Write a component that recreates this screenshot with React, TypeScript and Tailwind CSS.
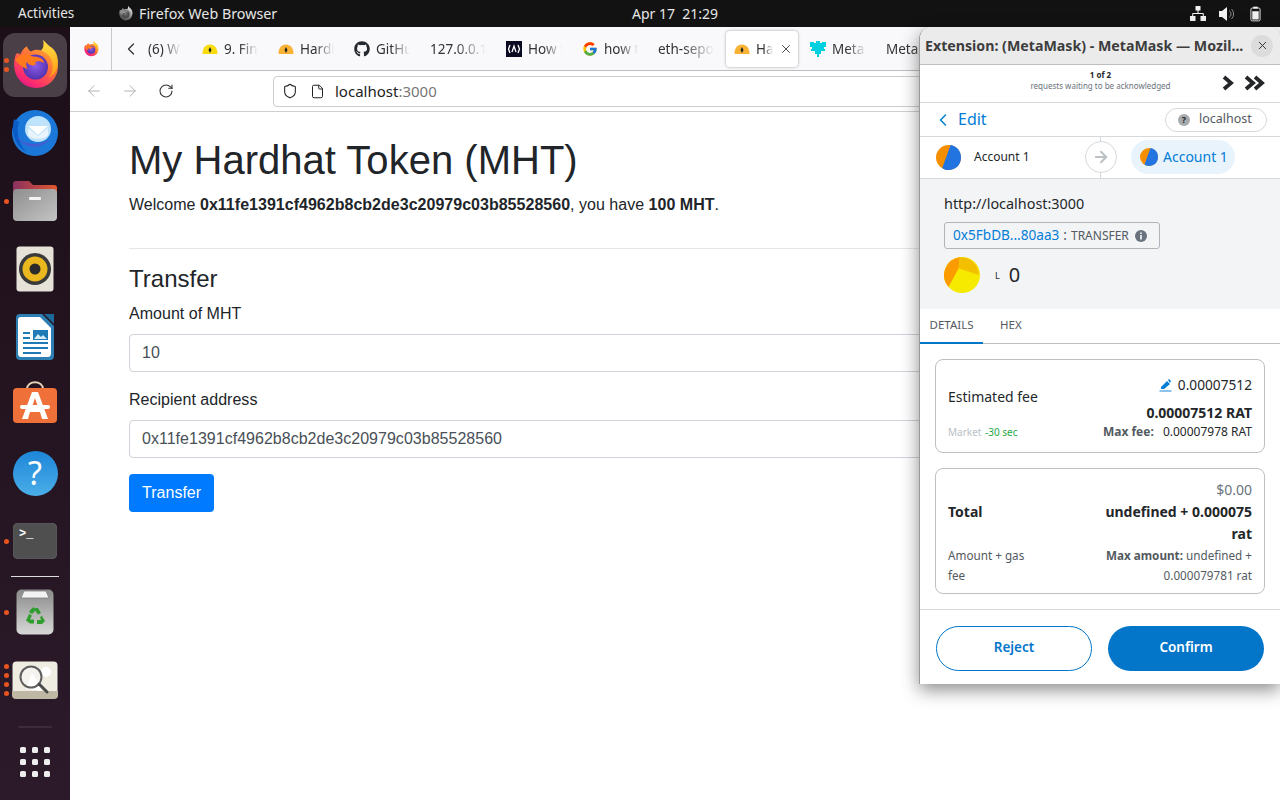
import { ArrowLeft, ArrowRight, ChevronLeft, File, RotateCw, Shield, X } from "lucide-react";
import { FaGithub } from "react-icons/fa";
import { FcGoogle } from "react-icons/fc";

function FirefoxLogo({ size = 48, gray = false }: { size?: number; gray?: boolean }) {
  const id = gray ? "g" : "c";
  return (
    <svg width={size} height={size} viewBox="0 0 48 48" style={gray ? { filter: "grayscale(1)" } : undefined}>
      <defs>
        <linearGradient id={`ff1${id}`} x1="0.8" y1="0" x2="0.2" y2="1">
          <stop offset="0" stopColor="#ffbd2e" />
          <stop offset="0.45" stopColor="#ff7139" />
          <stop offset="0.8" stopColor="#ff2d6d" />
          <stop offset="1" stopColor="#d8148d" />
        </linearGradient>
        <linearGradient id={`ff2${id}`} x1="0.5" y1="0" x2="0.5" y2="1">
          <stop offset="0" stopColor="#ffe14a" />
          <stop offset="1" stopColor="#ff980e" />
        </linearGradient>
        <radialGradient id={`ff3${id}`} cx="0.5" cy="0.45" r="0.6">
          <stop offset="0" stopColor="#8f5be8" />
          <stop offset="1" stopColor="#4b2ea8" />
        </radialGradient>
      </defs>
      <path d="M6 13C3 20 3 30 8 37c4 6 10 9 17 9 12 0 21-9 21-21 0-7-3-13-7-17-2-2-5-5-7-8 1 5 0 8-2 10-3-1-7-1-10 1-2-1-3-3-4-5-3 2-5 5-6 8l-1-1z" fill={`url(#ff1${id})`} />
      <path d="M32 0c1 5 0 8-2 10 6 2 11 8 11 15 0 4-1 8-4 11 6-3 9-8 9-15 0-8-4-13-8-15-2-2-5-4-6-6z" fill={`url(#ff2${id})`} />
      <circle cx="24.5" cy="26" r="12" fill={`url(#ff3${id})`} />
      <path d="M5 19c3-4 7-5 10-5 3 0 5 2 9 2 4 0 8 2 9 6-3-2-7-2-9-1 1 1 1 2 0 3-2 1-6 0-8-3-1 3 0 5 1 7-6-2-9-5-12-9z" fill="#ff7a1c" />
    </svg>
  );
}

function Hat({ color }: { color: string }) {
  return (
    <svg width="16" height="16" viewBox="0 0 16 16" className="shrink-0">
      <path d="M0.5 13C0.5 7 3.5 3.5 8 3.5S15.5 7 15.5 13Z" fill={color} />
      <path d="M8 6 9.5 9 8 12 6.5 9Z" fill="#222" />
    </svg>
  );
}

function CodeIcon() {
  return (
    <svg width="16" height="16" viewBox="0 0 16 16" className="shrink-0">
      <rect width="16" height="16" fill="#0a0a23" />
      <path d="M4 4 2.5 8 4 12M12 4l1.500 4L12 12M6 11l2-6 2 6" fill="none" stroke="#fff" strokeWidth="1.300" />
    </svg>
  );
}

function PuzzleIcon() {
  return (
    <svg width="16" height="16" viewBox="0 0 16 16" className="shrink-0">
      <path d="M0 1h4v1h2V0h4v2h2V1h4v5h-2v2h1v2h-4v3h-2v3H7v-3H5v-3H1V8h1V6H0z" fill="#00d0e0" />
    </svg>
  );
}

function Tab({ icon, label, active }: { icon?: React.ReactNode; label: string; active?: boolean }) {
  const width = active ? "w-[17px]" : icon ? "w-[34px]" : "w-[56px]";
  return (
    <div className={`mx-[2px] flex h-[36px] w-[72px] shrink-0 items-center gap-[6px] rounded-[4px] pl-[8px] ${active ? "bg-white shadow-[0_0_3px_rgba(0,0,0,0.35)]" : ""}`}>
      {icon}
      <span className={`shrink-0 overflow-hidden whitespace-nowrap [mask-image:linear-gradient(to_right,#000_45%,transparent)] ${width}`}>{label}</span>
      {active && <X size={14} strokeWidth={1.5} className="shrink-0 text-[#333]" />}
    </div>
  );
}

function Dot() {
  return <span className="h-[5px] w-[5px] rounded-full bg-[#e95420]" />;
}

function Slot({ dots = 0, active, children }: { dots?: number; active?: boolean; children: React.ReactNode }) {
  return (
    <div className="relative flex h-[68px] w-[70px] shrink-0 items-center justify-center">
      {active && <div className="absolute left-[3px] top-[2px] h-[64px] w-[64px] rounded-[12px] bg-[#4a3f46]" />}
      <div className="relative flex items-center justify-center">{children}</div>
      {dots > 0 && (
        <div className="absolute left-[3.500px] top-0 flex h-full flex-col justify-center gap-[4px]">
          {Array.from({ length: dots }).map((_, i) => (
            <Dot key={i} />
          ))}
        </div>
      )}
    </div>
  );
}

function Thunderbird() {
  return (
    <svg width="50" height="48" viewBox="0 0 50 48">
      <circle cx="25" cy="24" r="23" fill="#1b78d8" />
      <path d="M4 10c-3 12 0 26 12 33C8 33 6 22 9 13z" fill="#0a5bc4" />
      <circle cx="28" cy="20" r="13" fill="#bfe3fb" />
      <path d="M18 17h20l-10 9z" fill="#fff" />
      <path d="M18 19l10 8 10-8v7c-3 5-17 5-20 0z" fill="#e9f4fc" />
      <path d="M6 26c6 10 22 12 34 4-8 10-26 12-34-4z" fill="#5a4fcf" opacity="0.7" />
    </svg>
  );
}

function Files() {
  return (
    <svg width="46" height="42" viewBox="0 0 46 42">
      <defs>
        <linearGradient id="ft" x1="0" x2="1" y1="0" y2="0">
          <stop offset="0" stopColor="#8a3060" />
          <stop offset="1" stopColor="#e4572e" />
        </linearGradient>
        <linearGradient id="fb" x1="0" x2="1" y1="0" y2="1">
          <stop offset="0" stopColor="#8e8e8e" />
          <stop offset="1" stopColor="#c4c4c4" />
        </linearGradient>
      </defs>
      <path d="M1 20V4q0-3 3-3h13l4 4h21q3 0 3 3v12z" fill="url(#ft)" />
      <rect x="1" y="9" width="44" height="32" rx="4" fill="url(#fb)" />
      <rect x="17" y="17" width="12" height="3" rx="1" fill="#f4f4f4" />
    </svg>
  );
}

function Rhythmbox() {
  return (
    <svg width="38" height="46" viewBox="0 0 38 46">
      <rect x="0.500" y="0.500" width="37" height="45" rx="3" fill="#e7e2d8" />
      <circle cx="19" cy="23" r="16" fill="#3a3a3a" />
      <circle cx="19" cy="23" r="12.500" fill="#eab71e" />
      <circle cx="19" cy="23" r="5.500" fill="#2b2b2b" />
    </svg>
  );
}

function Writer() {
  return (
    <svg width="38" height="46" viewBox="0 0 38 46">
      <path d="M4 0h22l12 12v30q0 4-4 4H4q-4 0-4-4V4q0-4 4-4z" fill="#2d7fb3" />
      <path d="M5 3h19l11 11v25q0 4-3 4H5q-3 0-3-4V6q0-3 3-3z" fill="#fff" />
      <path d="M28 0h10v10z" fill="#1d6a9a" />
      <path d="M7 18h7v2H7zM7 23h7v2H7zM7 28h25v2H7zM7 33h25v2H7zM7 38h18v2H7z" fill="#1f7ab5" />
      <rect x="17" y="16" width="15" height="10" fill="#1f7ab5" />
      <path d="M18 25l4-5 3 3 2-2 4 4z" fill="#d6ecf8" />
    </svg>
  );
}

function Software() {
  return (
    <svg width="46" height="42" viewBox="0 0 46 42" className="-mt-[6px]">
      <path d="M15 8c0-9 16-9 16 0" fill="none" stroke="#e8d3b8" strokeWidth="2" />
      <rect x="1" y="7" width="44" height="35" rx="4" fill="#ef7139" />
      <path d="M20 11h6l10 27h-6l-2-7H18l-2 7h-6zM23 17l-3 9h6z" fill="#fff" />
      <rect x="8" y="24" width="30" height="4" rx="2" fill="#fff" />
    </svg>
  );
}

function Terminal() {
  return (
    <div className="flex h-[36px] w-[44px] rounded-[5px] bg-[#4f4f4f] px-[6px] pt-[3px] font-['Liberation_Mono',monospace] text-[12px] font-bold leading-[16px] text-white shadow-[inset_0_0_1px_#999]">
      &gt;_
    </div>
  );
}

function Trash() {
  return (
    <svg width="38" height="46" viewBox="0 0 38 46">
      <defs>
        <linearGradient id="tr" x1="0" x2="0" y1="0" y2="1">
          <stop offset="0" stopColor="#8a8a8a" />
          <stop offset="1" stopColor="#d8d8d8" />
        </linearGradient>
      </defs>
      <rect x="0.500" y="0.500" width="37" height="45" rx="5" fill="url(#tr)" />
      <path d="M5 9 8 2h22l3 7z" fill="#f2f2f2" stroke="#777" strokeWidth="0.700" />
      <path d="M19 19l3 0 3 5-3 1.500-3-4-2-1zM13 25l3 1.500-2 4 4 0 0 4h-4l-4-3zM26 27l3 5-3 3h-5v-4h4l-1-3z" fill="#2f9e2f" />
      <path d="M15 20l3-2 1 4-3 3-3-2z" fill="#2f9e2f" />
    </svg>
  );
}

function Eog() {
  return (
    <svg width="46" height="38" viewBox="0 0 46 38">
      <rect x="0.500" y="0.500" width="45" height="37" rx="4" fill="#efece2" />
      <path d="M0 30h46v4q0 4-4 4H4q-4 0-4-4z" fill="#bdb7a3" />
      <path d="M14 28l6-16 4 6 6 12z" fill="#fff" />
      <circle cx="34" cy="11" r="5" fill="#fff" />
      <circle cx="19" cy="16" r="10.500" fill="#ffffff66" stroke="#5f5f5f" strokeWidth="2" />
      <path d="M27 23l8 8" stroke="#4a4a4a" strokeWidth="3" strokeLinecap="round" />
    </svg>
  );
}

function Dock() {
  return (
    <aside className="flex w-[70px] shrink-0 flex-col items-center bg-gradient-to-b from-[#1c0f18] to-[#2c1a2a] pt-[4px]">
      <Slot active dots={2}>
        <FirefoxLogo size={50} />
      </Slot>
      <Slot>
        <Thunderbird />
      </Slot>
      <Slot dots={1}>
        <Files />
      </Slot>
      <Slot>
        <Rhythmbox />
      </Slot>
      <Slot>
        <Writer />
      </Slot>
      <Slot>
        <Software />
      </Slot>
      <Slot>
        <div className="flex h-[45px] w-[45px] items-center justify-center rounded-full bg-gradient-to-b from-[#1c86d8] to-[#4aaee8] font-['Noto_Sans',sans-serif] text-[32px] leading-none text-white">
          ?
        </div>
      </Slot>
      <Slot dots={1}>
        <Terminal />
      </Slot>
      <div className="my-[1px] h-px w-[48px] shrink-0 bg-[#ddd]" />
      <Slot dots={1}>
        <Trash />
      </Slot>
      <Slot dots={4}>
        <Eog />
      </Slot>
      <div className="mt-[12px] h-[2px] w-[34px] shrink-0 rounded-full bg-[#3d2b3b]" />
      <div className="mt-[19px] grid grid-cols-3 gap-x-[6px] gap-y-[6px]">
        {Array.from({ length: 9 }).map((_, i) => (
          <span key={i} className="h-[6px] w-[6px] rounded-[1.500px] bg-[#eeeeee]" />
        ))}
      </div>
    </aside>
  );
}

function TopBar() {
  return (
    <header className="flex h-[27px] shrink-0 items-center bg-[#121212] font-['Noto_Sans',sans-serif] text-[14px] text-[#e6e6e6]">
      <span className="ml-[18px] w-[100px] text-[13.500px]">Activities</span>
      <FirefoxLogo size={15} gray />
      <span className="ml-[6px] w-[493px] text-[14.300px]">Firefox Web Browser</span>
      <span className="whitespace-pre">Apr 17  21:29</span>
      <div className="ml-auto mr-[19px] flex items-center gap-[12px]">
        <svg width="16" height="16" viewBox="0 0 16 16" fill="#f2f2f2">
          <path d="M5.500 0h5v4.500h-5zM0 10h5.500v5H0zM10.500 10H16v5h-5.500z" />
          <path d="M8 4v3.500M2.700 10V7.500h10.600V10" fill="none" stroke="#f2f2f2" />
        </svg>
        <svg width="16" height="16" viewBox="0 0 16 16" fill="#f2f2f2" className="ml-[1px]">
          <path d="M0 5h3l5-4v14l-5-4H0z" />
          <path d="M10 4.500a4 4 0 0 1 0 7M12.500 3a7 7 0 0 1 0 10" fill="none" stroke="#888" />
        </svg>
        <svg width="11" height="16" viewBox="0 0 12 16" className="ml-[3px]">
          <rect x="3.500" y="0" width="5" height="2" fill="#f2f2f2" />
          <rect x="1" y="1.500" width="10" height="14" rx="1.500" fill="none" stroke="#f2f2f2" />
          <rect x="2.500" y="5" width="7" height="9" fill="#f2f2f2" />
        </svg>
      </div>
    </header>
  );
}

function Browser() {
  return (
    <div className="flex min-w-0 flex-1 flex-col bg-white">
      <div className="flex h-[44px] shrink-0 items-center overflow-hidden border-b border-[#bdbdbd] bg-[#f9f9fb] pt-[1px] font-['Noto_Sans',sans-serif] text-[13.5px] text-[#333]">
        <div className="flex h-full w-[42px] shrink-0 items-center justify-center border-r border-[#c8c8c8]">
          <FirefoxLogo size={16} />
        </div>
        <div className="flex h-full w-[36px] shrink-0 items-center justify-center pl-[2px]">
          <ChevronLeft size={20} strokeWidth={1.500} className="text-[#333]" />
        </div>
        <div className="w-[44px] shrink-0">
          <div className="w-[33px] overflow-hidden whitespace-nowrap [mask-image:linear-gradient(to_right,#000_45%,transparent)]">(6) Wh</div>
        </div>
        <Tab icon={<Hat color="#f8dc10" />} label="9. Find" />
        <Tab icon={<Hat color="#f9b233" />} label="Hardhat" />
        <Tab icon={<FaGithub size={16} className="shrink-0 text-[#24292f]" />} label="GitHub" />
        <Tab label="127.0.0.1:3000" />
        <Tab icon={<CodeIcon />} label="How to" />
        <Tab icon={<FcGoogle size={16} className="shrink-0" />} label="how to" />
        <Tab label="eth-sepolia" />
        <Tab active icon={<Hat color="#f9b233" />} label="Hardhat" />
        <Tab icon={<PuzzleIcon />} label="MetaMask" />
        <Tab label="MetaMask" />
      </div>
      <div className="flex h-[41px] shrink-0 items-center border-b border-[#cfcfcf] bg-white pr-[10px]">
        <ArrowLeft size={18} strokeWidth={1.300} className="ml-[15px] text-[#b0b0b0]" />
        <ArrowRight size={18} strokeWidth={1.300} className="ml-[18px] text-[#b0b0b0]" />
        <RotateCw size={16} strokeWidth={1.600} className="ml-[19px] text-[#333]" />
        <div className="ml-[99px] flex h-[31px] flex-1 items-center rounded-[4px] border border-[#cccccc] bg-white font-['Noto_Sans',sans-serif] text-[15px] text-[#222]">
          <Shield size={16} strokeWidth={1.600} className="ml-[8px] text-[#222]" />
          <File size={15} strokeWidth={1.600} className="ml-[12px] text-[#222]" />
          <span className="ml-[10px] pt-[1px]">
            localhost<span className="text-[#777]">:3000</span>
          </span>
        </div>
      </div>
      <main className="px-[59px] pt-[24px] font-['Liberation_Sans',sans-serif] text-[16px] leading-[24px] tracking-[0.02px] text-[#212529]">
        <h1 className="mb-[9px] text-[40px] leading-[48px]">My Hardhat Token (MHT)</h1>
        <p>
          Welcome <b>0x11fe1391cf4962b8cb2de3c20979c03b85528560</b>, you have <b>100 MHT</b>.
        </p>
        <hr className="mb-[16px] mt-[31px] border-[#e6e6e6]" />
        <h4 className="mb-[9px] text-[24px] leading-[28px]">Transfer</h4>
        <label className="mb-[8px] block">Amount of MHT</label>
        <div className="mb-[16px] flex h-[38px] items-center rounded-[4px] border border-[#ced4da] px-[12px] text-[#495057]">10</div>
        <label className="mb-[8px] block">Recipient address</label>
        <div className="mb-[16px] flex h-[38px] items-center rounded-[4px] border border-[#ced4da] px-[12px] text-[#495057]">0x11fe1391cf4962b8cb2de3c20979c03b85528560</div>
        <button className="h-[38px] rounded-[4px] bg-[#007bff] px-[13px] text-white">Transfer</button>
      </main>
    </div>
  );
}

function AccountIcon({ size }: { size: number }) {
  return (
    <svg width={size} height={size} viewBox="0 0 24 24" className="shrink-0">
      <circle cx="12" cy="12" r="12" fill="#f58f00" />
      <path d="M12 24c-3 0-5-1-6-2L14 0c6 1 10 6 10 12 0 7-5 12-12 12z" fill="#2274e0" />
    </svg>
  );
}

function MetaMask() {
  return (
    <section className="absolute left-[919px] top-[27px] flex h-[657px] w-[361px] flex-col overflow-hidden rounded-t-[12px] border-l border-[#9a9a9a] bg-white font-['Noto_Sans',sans-serif] text-[#24272a] shadow-[0_6px_18px_rgba(0,0,0,0.45)]">
      <div className="flex h-[38px] shrink-0 items-center border-b border-[#bdbdbd] bg-[#ebebeb] pl-[5px] pr-[7px]">
        <span className="flex-1 whitespace-nowrap text-[14.200px] font-bold text-[#3d3d3d]">Extension: (MetaMask) - MetaMask — Mozil...</span>
        <span className="flex h-[22px] w-[22px] items-center justify-center rounded-full bg-[#dcdcdc]">
          <X size={13} strokeWidth={1.800} className="text-[#333]" />
        </span>
      </div>
      <div className="relative flex h-[38px] shrink-0 flex-col items-center justify-center border-b border-[#d6d9dc] pb-[7px] pl-[1px]">
        <span className="text-[8px] font-bold leading-[11px]">1 of 2</span>
        <span className="text-[8px] leading-[11px] text-[#6a737d]">requests waiting to be acknowledged</span>
        <div className="absolute right-[14px] top-[10px] flex items-center gap-[10px]">
          <svg width="12" height="16" viewBox="0 0 12 16">
            <path d="M2 2l7 6-7 6" fill="none" stroke="#24272a" strokeWidth="3.800" />
          </svg>
          <svg width="22" height="16" viewBox="0 0 22 16">
            <path d="M2 2l7 6-7 6M11 2l7 6-7 6" fill="none" stroke="#24272a" strokeWidth="3.800" />
          </svg>
        </div>
      </div>
      <div className="flex h-[34px] shrink-0 items-center border-b border-[#d6d9dc] pl-[16px] pr-[13px]">
        <ChevronLeft size={20} strokeWidth={1.800} className="-ml-[3px] text-[#037dd6]" />
        <span className="ml-[5px] pb-[1px] text-[16px] leading-[20px] text-[#037dd6]">Edit</span>
        <div className="ml-auto flex h-[24px] w-[102px] items-center rounded-full border border-[#d6d9dc] pl-[12px]">
          <span className="flex h-[12px] w-[12px] items-center justify-center rounded-full bg-[#a8abae] text-[9px] font-bold leading-none text-[#24272a]">?</span>
          <span className="ml-[9px] text-[12.500px] text-[#535a61]">localhost</span>
        </div>
      </div>
      <div className="relative flex h-[42px] shrink-0 items-center border-b border-[#d6d9dc] pb-[1px] pl-[16px]">
        <AccountIcon size={25} />
        <span className="ml-[13px] text-[12px]">Account 1</span>
        <div className="absolute left-[180px] top-0 h-full w-px bg-[#d6d9dc]" />
        <div className="absolute left-[165px] top-[4px] flex h-[32px] w-[32px] items-center justify-center rounded-full border border-[#d6d9dc] bg-white">
          <ArrowRight size={18} strokeWidth={2.500} className="text-[#bbc0c5]" />
        </div>
        <div className="absolute left-[211px] top-[3px] flex h-[34px] w-[104px] items-center rounded-full bg-[#e8f3fb] pb-[1px] pl-[9px] text-[14px] text-[#037dd6]">
          <AccountIcon size={18} />
          <span className="ml-[5px]">Account 1</span>
        </div>
      </div>
      <div className="h-[130px] shrink-0 bg-[#f2f4f6] pl-[24px] pt-[15px]">
        <div className="text-[14.400px] leading-[20px]">http://localhost:3000</div>
        <div className="mt-[8px] flex h-[27px] w-[216px] items-center rounded-[3px] border border-[#b0b5bb] pl-[8px] text-[13.600px]">
          <span className="text-[#037dd6]">0x5FbDB...80aa3</span>
          <span className="ml-[4px] text-[#535a61]">:</span>
          <span className="ml-[4px] text-[12px] text-[#535a61]">TRANSFER</span>
          <svg width="12" height="12" viewBox="0 0 12 12" className="ml-[6px]">
            <circle cx="6" cy="6" r="6" fill="#6a737d" />
            <path d="M5.200 5h1.600v4.500H5.200zM5.200 2.500h1.600V4H5.200z" fill="#fff" />
          </svg>
        </div>
        <div className="mt-[8px] flex items-center">
          <svg width="36" height="36" viewBox="0 0 36 36" className="shrink-0">
            <circle cx="18" cy="18" r="18" fill="#f6ea00" />
            <path d="M16 0.300L14.500 11.500 4.500 30A18 18 0 0 1 16 0.300z" fill="#fb9b00" />
            <path d="M16 0.300L14.500 11.500 35 18A18 18 0 0 0 16 0.300z" fill="#f3c000" />
          </svg>
          <span className="ml-[15px] mt-[1px] text-[9px]">L</span>
          <span className="ml-[9px] text-[20px] leading-[28px]">0</span>
        </div>
      </div>
      <div className="flex h-[35px] shrink-0 border-b border-[#bbc0c5] text-[11.500px] text-[#535a61]">
        <div className="-mb-px flex w-[63px] items-center justify-center border-b-[2px] border-[#0376c9] pb-[1px]">DETAILS</div>
        <div className="ml-[17px] flex items-center pb-[2px]">HEX</div>
      </div>
      <div className="flex flex-1 flex-col border-b-0 px-[15px] pt-[15px]">
        <div className="h-[94px] shrink-0 rounded-[8px] border border-[#bbc0c5] px-[12px] pt-[15px]">
          <div className="flex justify-between">
            <span className="mt-[12px] text-[14px] leading-[20px]">Estimated fee</span>
            <div className="text-right">
              <div className="flex items-center justify-end text-[13.700px] leading-[20px] text-[#24272a]">
                <svg width="13" height="14" viewBox="0 0 13 14" className="mr-[6px]">
                  <path d="M2 9 8 3l3 3-6 5H2zM9 2l1-1 2 2-1 2z" fill="#037dd6" />
                  <rect x="0.500" y="12" width="12" height="2" fill="#8ec4ec" />
                </svg>
                0.00007512
              </div>
              <div className="mt-[8px] text-[14px] font-bold leading-[20px]">0.00007512 RAT</div>
            </div>
          </div>
          <div className="mt-[1px] flex items-center justify-between text-[12px] leading-[16px]">
            <span className="text-[10px] text-[#bbc0c5]">
              Market <span className="ml-[1px] text-[#28a745]">-30 sec</span>
            </span>
            <span className="text-[#24272a]">
              <b className="text-[#535a61]">Max fee:</b> <span className="ml-[6px]">0.00007978 RAT</span>
            </span>
          </div>
        </div>
        <div className="mt-[15px] h-[126px] shrink-0 rounded-[8px] border border-[#bbc0c5] px-[12px] pt-[11px]">
          <div className="text-right text-[14px] leading-[20px] text-[#6a737d]">$0.00</div>
          <div className="flex justify-between text-[14px] font-bold leading-[22px]">
            <span className="mt-[1px]">Total</span>
            <span className="mt-[1px] text-right">
              undefined + 0.000075
              <br />
              rat
            </span>
          </div>
          <div className="flex justify-between text-[11.700px] leading-[20px] text-[#535a61]">
            <span>
              Amount + gas
              <br />
              fee
            </span>
            <span className="text-right">
              <b>Max amount:</b> undefined +
              <br />
              0.000079781 rat
            </span>
          </div>
        </div>
      </div>
      <div className="flex h-[75px] shrink-0 gap-[16px] border-t border-[#d6d9dc] px-[16px] pt-[16px] text-[13.500px] font-semibold">
        <button className="h-[45px] w-[156px] rounded-full border border-[#0376c9] pb-[2px] text-[#0376c9]">Reject</button>
        <button className="h-[45px] w-[156px] rounded-full bg-[#0376c9] pb-[2px] text-white">Confirm</button>
      </div>
    </section>
  );
}

export default function App() {
  return (
    <div className="relative flex h-[800px] w-[1280px] flex-col overflow-hidden">
      <TopBar />
      <div className="flex min-h-0 flex-1">
        <Dock />
        <Browser />
      </div>
      <MetaMask />
    </div>
  );
}
